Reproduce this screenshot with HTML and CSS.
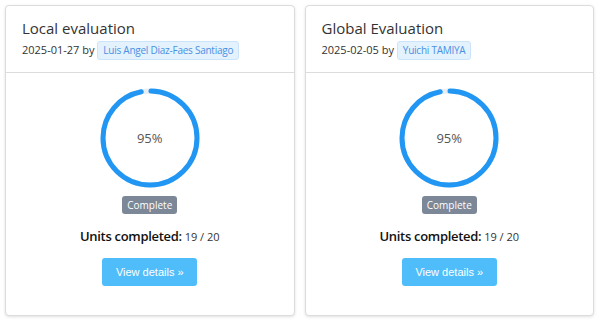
FILE: index.html
```html
<!DOCTYPE html>
<html lang="en">
<head>
    <meta charset="UTF-8">
    <meta name="viewport" content="width=device-width, initial-scale=1.0">
    <title>Evaluations</title>
    <link rel="stylesheet" href="styles.css">
</head>
<body>
    <main class="cards">
        <section class="card">
            <div class="card-header">
                <h2>Local evaluation</h2>
                <p class="meta">2025-01-27 by <span class="author">Luis Angel Diaz-Faes Santiago</span></p>
            </div>
            <div class="card-body">
                <div class="progress">
                    <svg width="100" height="100" viewBox="0 0 100 100">
                        <circle class="track" cx="50" cy="50" r="47"></circle>
                        <circle class="bar" cx="50" cy="50" r="47" stroke-dasharray="285 296"></circle>
                    </svg>
                    <span class="percent">95%</span>
                </div>
                <span class="status">Complete</span>
                <p class="units"><b>Units completed:</b> 19 / 20</p>
                <button class="details">View details »</button>
            </div>
        </section>
        <section class="card">
            <div class="card-header">
                <h2>Global Evaluation</h2>
                <p class="meta">2025-02-05 by <span class="author">Yuichi TAMIYA</span></p>
            </div>
            <div class="card-body">
                <div class="progress">
                    <svg width="100" height="100" viewBox="0 0 100 100">
                        <circle class="track" cx="50" cy="50" r="47"></circle>
                        <circle class="bar" cx="50" cy="50" r="47" stroke-dasharray="285 296"></circle>
                    </svg>
                    <span class="percent">95%</span>
                </div>
                <span class="status">Complete</span>
                <p class="units"><b>Units completed:</b> 19 / 20</p>
                <button class="details">View details »</button>
            </div>
        </section>
    </main>
</body>
</html>
```

FILE: styles.css
```css
* {
    margin: 0;
    padding: 0;
    box-sizing: border-box;
}

body {
    font-family: 'Open Sans', sans-serif;
    background: #ffffff;
    color: #222;
}

.cards {
    display: flex;
    gap: 10px;
    padding: 5px 6px 6px 5px;
}

.card {
    flex: 1;
    height: 311px;
    background: #fff;
    border: 1px solid #dcdcdc;
    border-radius: 4px;
    box-shadow: 0 1px 3px rgba(0, 0, 0, 0.12);
}

.card-header {
    height: 67px;
    padding: 12px 16px 0;
    border-bottom: 1px solid #dcdcdc;
}

.card-header h2 {
    font-size: 15px;
    font-weight: 400;
    line-height: 20px;
    color: #333;
}

.meta {
    font-size: 11px;
    line-height: 21px;
    color: #333;
    margin-top: 1px;
}

.author {
    display: inline-block;
    padding: 0 5px;
    line-height: 17px;
    background: #e3f2fd;
    border: 1px solid #cce4fa;
    border-radius: 3px;
    color: #4a90e2;
    font-size: 10px;
    letter-spacing: -0.25px;
}

.card-body {
    display: flex;
    flex-direction: column;
    align-items: center;
    padding-top: 15px;
}

.progress {
    position: relative;
    width: 100px;
    height: 100px;
}

.progress svg {
    display: block;
    transform: rotate(-90deg);
}

.track {
    fill: none;
    stroke: #e8eef4;
    stroke-width: 5;
}

.bar {
    fill: none;
    stroke: #2196f3;
    stroke-width: 5;
    stroke-linecap: round;
    stroke-dashoffset: -1;
}

.percent {
    position: absolute;
    inset: 0;
    display: flex;
    align-items: center;
    justify-content: center;
    font-size: 13px;
    color: #555;
}

.status {
    margin-top: 8px;
    padding: 0 5px;
    line-height: 18px;
    font-size: 10px;
    color: #fff;
    background: #7c8798;
    border-radius: 3px;
}

.units {
    margin-top: 12px;
    font-size: 11px;
    line-height: 20px;
    color: #333;
}

.units b {
    font-size: 13px;
    font-weight: 600;
    letter-spacing: -0.3px;
    color: #111;
}

.details {
    margin-top: 11px;
    width: 95px;
    height: 28px;
    border: none;
    border-radius: 3px;
    background: #4fbdf9;
    color: #fff;
    font-family: 'Liberation Sans', Arial, sans-serif;
    font-size: 11px;
    cursor: pointer;
}
```
